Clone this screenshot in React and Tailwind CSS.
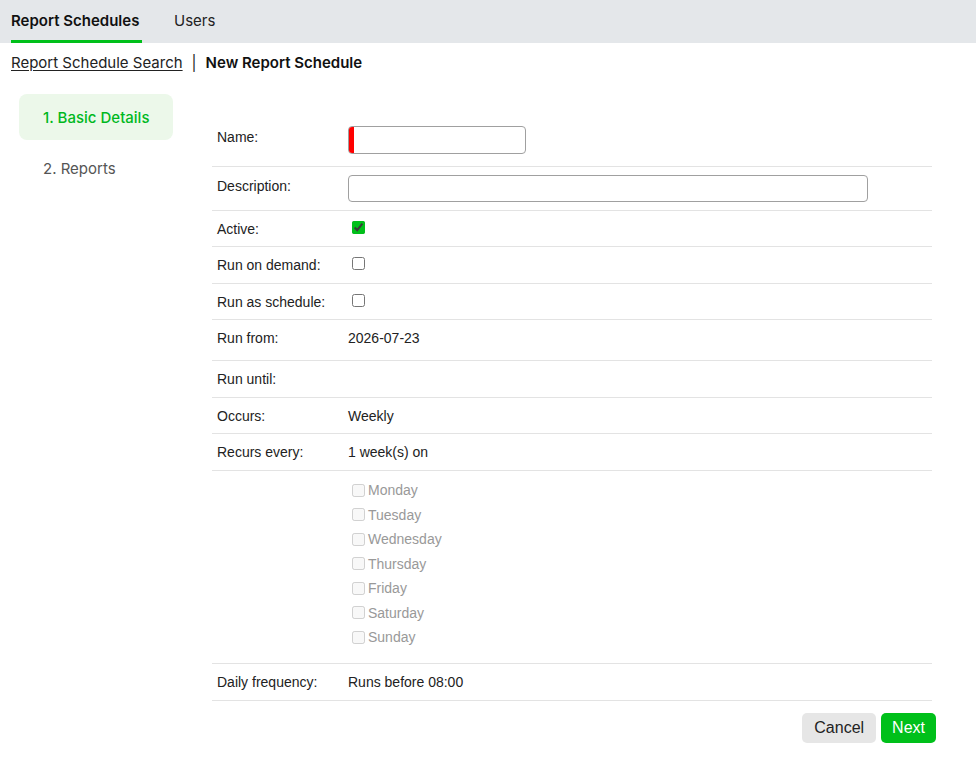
import React, { useState } from 'react';

const days = ['Monday', 'Tuesday', 'Wednesday', 'Thursday', 'Friday', 'Saturday', 'Sunday'];

const Row = ({ label, children, className = 'h-[37px] items-center' }) => (
  <div className={`flex border-b border-[#e3e3e3] ${className}`}>
    <div className="w-[136px] shrink-0 pl-[5px]">{label}</div>
    <div className="flex-1">{children}</div>
  </div>
);

const App = () => {
  const [active, setActive] = useState(true);
  const [onDemand, setOnDemand] = useState(false);
  const [asSchedule, setAsSchedule] = useState(false);

  return (
    <div className="min-h-[762px] bg-white text-[#222]" style={{ fontFamily: 'Inter, "Noto Sans", sans-serif' }}>
      {/* Tabs */}
      <div className="flex h-[43px] items-end gap-[32px] bg-[#e4e7ea] px-[11px]">
        <div className="flex h-full flex-col justify-between">
          <span className="pt-[10px] text-[15px] font-semibold leading-[21px] text-[#111]">Report Schedules</span>
          <span className="h-[3px] w-[131px] bg-[#00c01a]" />
        </div>
        <div className="flex h-full flex-col">
          <span className="pt-[10px] text-[15px] leading-[21px] text-[#222]">Users</span>
        </div>
      </div>

      {/* Breadcrumb */}
      <div className="flex items-center px-[11px] pt-[10px] text-[15px] leading-[20px]">
        <a href="#" className="text-[#222] underline underline-offset-2">Report Schedule Search</a>
        <span className="mx-[9px] text-[#222]">|</span>
        <span className="font-semibold text-[#111]">New Report Schedule</span>
      </div>

      <div className="flex pt-[21px]">
        {/* Steps */}
        <div className="ml-[19px] w-[154px] shrink-0">
          <div className="flex h-[46px] items-center rounded-[8px] bg-[#ecf8ea] pl-[24px] pt-[2px] text-[15px] font-medium text-[#00b81e]">
            1. Basic Details
          </div>
          <div className="flex h-[56px] items-center pl-[24px] pt-[2px] text-[15px] text-[#555]">2. Reports</div>
        </div>

        {/* Form */}
        <div className="ml-[39px] w-[720px] pt-[24px] text-[14px] leading-[16px]" style={{ fontFamily: '"Liberation Sans", Arial, sans-serif' }}>
          <Row label={<span className="relative top-[-3px]">Name:</span>} className="h-[49px] items-center pb-[4px]">
            <div className="relative h-[28px] w-[178px] overflow-hidden rounded-[4px] border border-[#a0a0a0]">
              <span className="absolute left-0 top-0 h-full w-[5px] bg-[#ff0000]" />
              <input className="h-full w-full pl-[8px] outline-none" />
            </div>
          </Row>
          <Row label={<span className="relative top-[-3px]">Description:</span>} className="h-[44px] items-center">
            <input className="h-[27px] w-[520px] rounded-[4px] border border-[#a0a0a0] px-[6px] outline-none" />
          </Row>
          <Row label="Active:" className="h-[36px] items-center">
            <input type="checkbox" checked={active} onChange={() => setActive(!active)} className="ml-[4px] h-[13px] w-[13px] accent-[#00c01a]" />
          </Row>
          <Row label="Run on demand:">
            <input type="checkbox" checked={onDemand} onChange={() => setOnDemand(!onDemand)} className="ml-[4px] h-[13px] w-[13px] accent-[#00c01a]" />
          </Row>
          <Row label="Run as schedule:" className="h-[36px] items-center">
            <input type="checkbox" checked={asSchedule} onChange={() => setAsSchedule(!asSchedule)} className="ml-[4px] h-[13px] w-[13px] accent-[#00c01a]" />
          </Row>
          <Row label="Run from:" className="h-[41px] items-center pb-[4px]">
            <span>2026-07-23</span>
          </Row>
          <Row label="Run until:" className="h-[37px] items-center">
            <span />
          </Row>
          <Row label="Occurs:" className="h-[36px] items-center">
            <span>Weekly</span>
          </Row>
          <Row label="Recurs every:">
            <span>1 week(s) on</span>
          </Row>
          <Row label="" className="h-[193px] items-start pt-[7px]">
            <div className="flex flex-col">
              {days.map((d) => (
                <label key={d} className="flex h-[24.5px] items-center text-[#999]">
                  <input type="checkbox" disabled className="ml-[4px] mr-[3px] h-[13px] w-[13px]" />
                  {d}
                </label>
              ))}
            </div>
          </Row>
          <Row label="Daily frequency:">
            <span>Runs before 08:00</span>
          </Row>

          <div className="flex justify-end gap-[5px] pt-[12px]" style={{ marginRight: '-4px' }}>
            <button className="h-[30px] rounded-[5px] bg-[#e6e6e6] px-[12px] text-[16px] text-[#222]">Cancel</button>
            <button className="h-[30px] rounded-[5px] bg-[#00c01a] px-[11px] text-[16px] text-white">Next</button>
          </div>
        </div>
      </div>
    </div>
  );
};

export default App;
